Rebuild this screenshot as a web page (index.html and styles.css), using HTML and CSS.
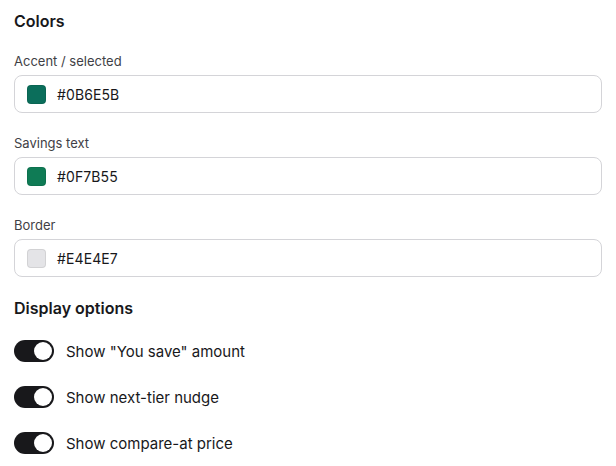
FILE: index.html
```html
<!DOCTYPE html>
<html lang="en">
<head>
    <meta charset="UTF-8">
    <title>Colors</title>
    <link rel="stylesheet" href="styles.css">
</head>
<body>
    <div class="panel">
        <h2 class="section-title">Colors</h2>
        <div class="fields">
            <div class="field">
                <label class="field-label">Accent / selected</label>
                <div class="color-input">
                    <span class="swatch swatch-accent"></span>
                    <span class="hex">#0B6E5B</span>
                </div>
            </div>
            <div class="field">
                <label class="field-label">Savings text</label>
                <div class="color-input">
                    <span class="swatch swatch-savings"></span>
                    <span class="hex">#0F7B55</span>
                </div>
            </div>
            <div class="field">
                <label class="field-label">Border</label>
                <div class="color-input">
                    <span class="swatch swatch-border"></span>
                    <span class="hex">#E4E4E7</span>
                </div>
            </div>
        </div>

        <h2 class="section-title">Display options</h2>
        <div class="options">
            <label class="option">
                <span class="toggle on"><span class="knob"></span></span>
                <span class="option-text">Show "You save" amount</span>
            </label>
            <label class="option">
                <span class="toggle on"><span class="knob"></span></span>
                <span class="option-text">Show next-tier nudge</span>
            </label>
            <label class="option">
                <span class="toggle on"><span class="knob"></span></span>
                <span class="option-text">Show compare-at price</span>
            </label>
        </div>
    </div>
</body>
</html>
```

FILE: styles.css
```css
body {
    margin: 0;
    font-family: Inter, "Liberation Sans", Arial, sans-serif;
    background-color: #fff;
    color: #18181b;
}
.panel {
    padding: 9px 14px 0;
    display: flex;
    flex-direction: column;
}
.section-title {
    margin: 0 0 19px;
    font-size: 16px;
    line-height: 24px;
    font-weight: 600;
    color: #18181b;
}
.fields {
    display: flex;
    flex-direction: column;
    gap: 21px;
    margin-bottom: 19px;
}
.field {
    display: flex;
    flex-direction: column;
    gap: 5px;
}
.field-label {
    font-size: 13px;
    line-height: 18px;
    color: #3f3f46;
}
.color-input {
    height: 38px;
    box-sizing: border-box;
    border: 1px solid #d4d4d8;
    border-radius: 8px;
    display: flex;
    align-items: center;
    padding: 0 12px;
    gap: 11px;
}
.swatch {
    width: 19px;
    height: 19px;
    border-radius: 4px;
    box-sizing: border-box;
    border: 1px solid rgba(0, 0, 0, 0.08);
}
.swatch-accent {
    background-color: #0b6e5b;
}
.swatch-savings {
    background-color: #0f7b55;
}
.swatch-border {
    background-color: #e4e4e7;
}
.hex {
    font-size: 14px;
    letter-spacing: 0.1px;
    color: #18181b;
}
.options {
    display: flex;
    flex-direction: column;
    gap: 24px;
    margin-top: 1px;
}
.option {
    display: flex;
    align-items: center;
    gap: 12px;
    font-size: 15px;
}
.toggle {
    width: 40px;
    height: 22px;
    border-radius: 11px;
    background-color: #d4d4d8;
    position: relative;
}
.toggle.on {
    background-color: #18181b;
}
.knob {
    position: absolute;
    top: 2px;
    left: 2px;
    width: 18px;
    height: 18px;
    border-radius: 50%;
    background-color: #fff;
}
.toggle.on .knob {
    left: 20px;
}
```
